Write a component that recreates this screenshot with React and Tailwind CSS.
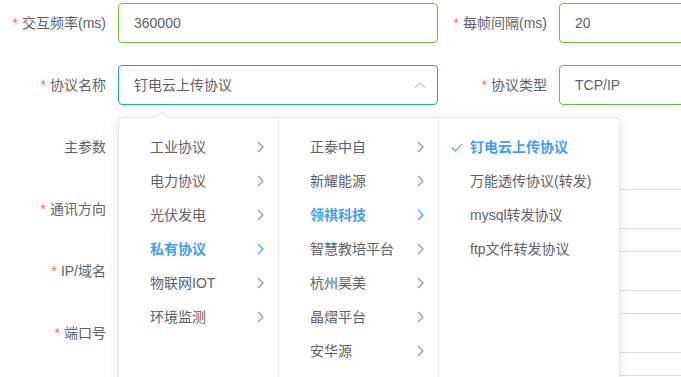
import React from 'react';

const LEFT = ['工业协议', '电力协议', '光伏发电', '私有协议', '物联网IOT', '环境监测'];
const MIDDLE = ['正泰中自', '新耀能源', '领祺科技', '智慧教培平台', '杭州昊美', '晶熠平台', '安华源'];
const RIGHT = ['钉电云上传协议', '万能透传协议(转发)', 'mysql转发协议', 'ftp文件转发协议'];

const Chevron = ({ active }) => (
  <svg width="7" height="12" viewBox="0 0 7 12" className="absolute right-[14px] top-[11px]">
    <polyline points="1,1 6,6 1,11" fill="none" stroke={active ? '#409eff' : '#909399'} strokeWidth="1.1" />
  </svg>
);

const Label = ({ text, required }) => (
  <div className="w-[118px] shrink-0 pr-3 text-right leading-10 text-sm text-[#606266]">
    {required && <span className="mr-1 text-[#f56c6c]">*</span>}
    {text}
  </div>
);

const Input = ({ value, border = 'border-[#dcdfe6]', children }) => (
  <div className={`relative h-10 w-[320px] shrink-0 rounded border ${border} pl-[15px] leading-[38px] text-sm text-[#606266]`}>
    {value}
    {children}
  </div>
);

const Row = ({ children }) => <div className="mb-[22px] flex h-10">{children}</div>;

const Column = ({ items, active, width, arrows }) => (
  <div className={`${width} shrink-0 border-r border-[#e4e7ed] pt-3 last:border-r-0`}>
    {items.map((item) => (
      <div
        key={item}
        className={`relative h-[34px] pl-[31px] leading-[34px] text-sm ${
          item === active ? 'font-bold text-[#409eff]' : 'text-[#606266]'
        }`}
      >
        {!arrows && item === active && (
          <svg width="12" height="9" viewBox="0 0 12 9" className="absolute left-[12px] top-[13px]">
            <polyline points="1,4.5 4.5,8 11,1" fill="none" stroke="#409eff" strokeWidth="1.1" />
          </svg>
        )}
        {item}
        {arrows && <Chevron active={item === active} />}
      </div>
    ))}
  </div>
);

export default function App() {
  return (
    <div className="relative h-[377px] w-[681px] overflow-hidden bg-white font-['Liberation_Sans','Noto_Sans_CJK_SC',sans-serif]">
      <div className="w-[900px] pt-[3px]">
        <Row>
          <Label text="交互频率(ms)" required />
          <Input value="360000" border="border-[#67c23a]" />
          <div className="w-[3px]" />
          <Label text="每帧间隔(ms)" required />
          <Input value="20" border="border-[#67c23a]" />
        </Row>
        <Row>
          <Label text="协议名称" required />
          <Input value="钉电云上传协议" border="border-[#13b5a4]">
            <svg width="12" height="7" viewBox="0 0 12 7" className="absolute right-[11px] top-[16px]">
              <polyline points="1,6 6,1 11,6" fill="none" stroke="#c0c4cc" strokeWidth="1.1" />
            </svg>
          </Input>
          <div className="w-[3px]" />
          <Label text="协议类型" required />
          <Input value="TCP/IP" border="border-[#67c23a]" />
        </Row>
        <Row>
          <Label text="主参数" />
          <Input />
        </Row>
        <Row>
          <Label text="通讯方向" required />
          <Input />
          <div className="w-[3px]" />
          <Label text="" />
          <Input />
        </Row>
        <Row>
          <Label text="IP/域名" required />
          <Input />
          <div className="w-[3px]" />
          <Label text="" />
          <Input />
        </Row>
        <Row>
          <Label text="端口号" required />
          <Input />
          <div className="w-[3px]" />
          <Label text="" />
          <Input />
        </Row>
        <Row>
          <Label text="" />
          <Input />
          <div className="w-[3px]" />
          <Label text="" />
          <Input />
        </Row>
      </div>

      <div className="absolute left-[118px] top-[117px] z-10 rounded border border-[#e4e7ed] bg-white shadow-[0_2px_12px_0_rgba(0,0,0,0.1)]">
        <div className="absolute -top-[5px] left-[38px] h-[9px] w-[9px] rotate-45 border-l border-t border-[#e4e7ed] bg-white" />
        <div className="relative flex h-[300px]">
          <Column items={LEFT} active="私有协议" width="w-[160px]" arrows />
          <Column items={MIDDLE} active="领祺科技" width="w-[160px]" arrows />
          <Column items={RIGHT} active="钉电云上传协议" width="w-[180px]" />
        </div>
      </div>
    </div>
  );
}
